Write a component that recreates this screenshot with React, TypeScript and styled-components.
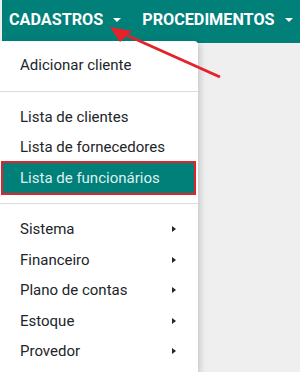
import React from "react";
import styled, { createGlobalStyle } from "styled-components";

const GlobalStyle = createGlobalStyle`
  html, body {
    margin: 0;
    padding: 0;
    background: #ffffff;
  }
  body {
    font-family: Roboto, "Liberation Sans", sans-serif;
  }
`;

const StyledPage = styled.div`
  position: relative;
  width: 300px;
  height: 372px;
  overflow: hidden;
  background-color: #efefef;
`;

const StyledNavbar = styled.nav`
  height: 43px;
  margin-left: 2px;
  background-color: #01807a;
  display: flex;
  align-items: center;
  padding: 0 0 4px 7px;
  box-sizing: border-box;
  gap: 21px;
`;

const StyledNavItem = styled.div`
  display: flex;
  align-items: center;
  gap: 10px;
  color: #ffffff;
  font-size: 16.2px;
  font-weight: 700;
  text-transform: uppercase;
  white-space: nowrap;
`;

const StyledCaret = styled.span`
  width: 0;
  height: 0;
  border-left: 4.5px solid transparent;
  border-right: 4.5px solid transparent;
  border-top: 4.5px solid #ffffff;
  margin-top: 1px;
`;

const StyledDropdown = styled.div`
  position: absolute;
  top: 41px;
  left: 0;
  bottom: 0;
  width: 198px;
  padding-top: 9px;
  background-color: #ffffff;
  border-radius: 0 4px 0 0;
  box-shadow: 2px 2px 6px rgba(0, 0, 0, 0.18);
`;

const StyledItem = styled.div<{ $active?: boolean }>`
  height: 30.5px;
  display: flex;
  align-items: center;
  justify-content: space-between;
  padding: 0 22px 0 ${(p) => (p.$active ? "17px" : "20px")};
  margin: ${(p) => (p.$active ? "0 4px 0 3px" : "0")};
  font-size: 15px;
  color: ${(p) => (p.$active ? "#dff1ef" : "#212529")};
  background-color: ${(p) => (p.$active ? "#01807a" : "transparent")};
  outline: ${(p) => (p.$active ? "2px solid #e3222a" : "none")};
  white-space: nowrap;
`;

const StyledDivider = styled.div`
  height: 1px;
  margin: 10px 0;
  background-color: #dcdcdc;
`;

const StyledSubCaret = styled.span`
  width: 0;
  height: 0;
  border-top: 3.5px solid transparent;
  border-bottom: 3.5px solid transparent;
  border-left: 4px solid #212529;
`;

const StyledArrow = styled.svg`
  position: absolute;
  top: 0;
  left: 0;
  pointer-events: none;
`;

const groups = [
  ["Adicionar cliente"],
  ["Lista de clientes", "Lista de fornecedores", "Lista de funcionários"],
];

const subMenus = ["Sistema", "Financeiro", "Plano de contas", "Estoque", "Provedor"];

const App = () => {
  return (
    <StyledPage>
      <GlobalStyle />
      <StyledNavbar>
        <StyledNavItem>
          Cadastros <StyledCaret />
        </StyledNavItem>
        <StyledNavItem>
          Procedimentos <StyledCaret />
        </StyledNavItem>
      </StyledNavbar>
      <StyledDropdown>
        {groups.map((group, gi) => (
          <React.Fragment key={gi}>
            {group.map((label) => (
              <StyledItem key={label} $active={label === "Lista de funcionários"}>
                {label}
              </StyledItem>
            ))}
            <StyledDivider />
          </React.Fragment>
        ))}
        {subMenus.map((label) => (
          <StyledItem key={label}>
            {label}
            <StyledSubCaret />
          </StyledItem>
        ))}
      </StyledDropdown>
      <StyledArrow width="300" height="372" viewBox="0 0 300 372">
        <line x1="124" y1="34" x2="220" y2="77" stroke="#e3222a" strokeWidth="3" />
        <polygon points="110,27 120,42 132,31" fill="#e3222a" />
      </StyledArrow>
    </StyledPage>
  );
};

export default App;
